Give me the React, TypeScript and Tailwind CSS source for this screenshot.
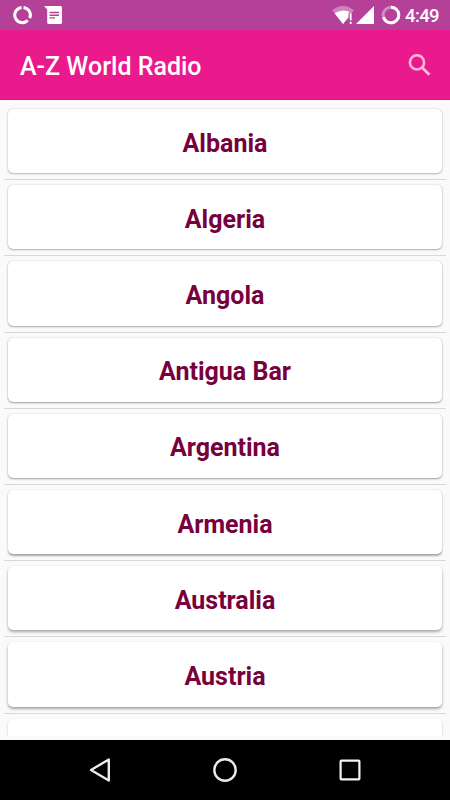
const countries = [
  { name: 'Albania', shadow: 'shadow-[0_0_1.5px_rgba(0,0,0,0.26),0_1px_2px_rgba(0,0,0,0.24)]' },
  { name: 'Algeria', shadow: 'shadow-[0_0_1.5px_rgba(0,0,0,0.24),0_1px_2px_rgba(0,0,0,0.28)]' },
  { name: 'Angola', shadow: 'shadow-[0_0_1.5px_rgba(0,0,0,0.22),0_1px_2px_rgba(0,0,0,0.30)]' },
  { name: 'Antigua Bar', shadow: 'shadow-[0_0_1.5px_rgba(0,0,0,0.18),0_1px_2px_rgba(0,0,0,0.34)]' },
  { name: 'Argentina', shadow: 'shadow-[0_0_1.5px_rgba(0,0,0,0.14),0_1px_2px_rgba(0,0,0,0.36)]' },
  { name: 'Armenia', shadow: 'shadow-[0_0_1.5px_rgba(0,0,0,0.12),0_1.5px_2px_rgba(0,0,0,0.32)]' },
  { name: 'Australia', shadow: 'shadow-[0_0_1.5px_rgba(0,0,0,0.10),0_2px_3px_rgba(0,0,0,0.32)]' },
  { name: 'Austria', shadow: 'shadow-[0_0_1.5px_rgba(0,0,0,0.08),0_2px_3px_rgba(0,0,0,0.34)]' },
  { name: '', shadow: 'shadow-[0_1px_2px_rgba(0,0,0,0.25)]' },
];

function StatusBar() {
  return (
    <div className="flex h-[30px] shrink-0 items-center bg-[#b54098] text-white">
      <svg className="ml-[13px] h-[20px] w-[20px]" viewBox="0 0 20 20" fill="none" stroke="white" strokeWidth="3">
        <path d="M10.5 2.4A7.6 7.6 0 0 1 16.6 13.2M14.8 15.4A7.6 7.6 0 1 1 8.6 2.5" />
      </svg>
      <svg className="ml-[11px] h-[20px] w-[20px]" viewBox="0 0 20 20">
        <path d="M0 1H16.5Q18 1 18 2.5V17.5Q18 19 16.5 19H4.8Q3.2 19 3.2 17.5V4.5Z" fill="white" />
        <path d="M5.6 7.5H15M5.6 10.2H15M5.6 12.9H11" stroke="#b54098" strokeWidth="1.4" />
      </svg>
      <svg className="ml-auto h-[20px] w-[22px]" viewBox="0 0 22 20">
        <path d="M0 5.2Q11 -3.4 22 5.2L19.5 8.2H17L11 19Z" fill="white" fillOpacity="0.35" />
        <path d="M2.6 8.2Q10.5 3.2 18.6 7.2H16.5V12.5L11 19Z" fill="white" />
        <path d="M18.7 8.2V15.2M18.7 16.8V19" stroke="white" strokeWidth="1.8" />
      </svg>
      <svg className="ml-[2px] h-[20px] w-[18px]" viewBox="0 0 18 20">
        <path d="M0 19H18V1Z" fill="white" />
      </svg>
      <svg className="ml-[7px] h-[20px] w-[20px]" viewBox="0 0 20 20" fill="none" strokeWidth="3">
        <circle cx="10" cy="10" r="7.8" stroke="white" strokeOpacity="0.4" />
        <path d="M10 2.2A7.8 7.8 0 1 1 2.5 12.2" stroke="white" />
      </svg>
      <span className="mr-[11px] ml-[4px] w-[34px] pt-px text-[18.5px] leading-[30px] font-medium tracking-[-0.6px] whitespace-nowrap">
        4:49
      </span>
    </div>
  );
}

function AppBar() {
  return (
    <header className="flex h-[70px] shrink-0 items-center justify-between border-b border-[#dc1580] bg-[#ea198c] pr-[18px] pl-5 text-white">
      <h1 className="pt-1 text-[25px] leading-[30px] font-medium">A-Z World Radio</h1>
      <svg className="h-[24px] w-[24px]" viewBox="0 0 24 24" fill="none" stroke="#fab6dc" strokeWidth="2.6">
        <circle cx="9" cy="9.4" r="7.1" />
        <path d="M13.9 14.3L21.4 21.8" strokeWidth="3" />
      </svg>
    </header>
  );
}

function NavigationBar() {
  return (
    <nav className="flex h-[60px] shrink-0 items-center justify-between bg-black px-[85px]">
      <svg className="h-[30px] w-[30px]" viewBox="0 0 30 30" fill="none" stroke="#ebebeb" strokeWidth="2.4" strokeLinejoin="round">
        <path d="M6 15L23.8 4.5V25.5Z" />
      </svg>
      <svg className="h-[30px] w-[30px]" viewBox="0 0 30 30" fill="none" stroke="#ebebeb" strokeWidth="2.4">
        <circle cx="15" cy="15" r="10.7" />
      </svg>
      <svg className="h-[30px] w-[30px]" viewBox="0 0 30 30" fill="none" stroke="#f2f2f2" strokeWidth="2.2">
        <rect x="5.6" y="5.6" width="18.8" height="18.8" rx="0.8" />
      </svg>
    </nav>
  );
}

export default function App() {
  return (
    <div className="flex h-[800px] w-[450px] flex-col overflow-hidden bg-[#fafafa] font-['Roboto',sans-serif]">
      <StatusBar />
      <AppBar />
      <main className="min-h-0 flex-1 px-1 py-1">
        <ul className="h-full overflow-hidden">
          {countries.map(({ name, shadow }) => (
            <li key={name} className="h-[76.2px] border-b border-[#d8d8d8] px-1 pt-[5px] pb-[6px]">
              <div
                className={`flex h-full items-center justify-center rounded-[5px] bg-white pt-[5px] text-[25px] leading-[30px] font-bold text-[#78003c] ${shadow}`}
              >
                {name}
              </div>
            </li>
          ))}
        </ul>
      </main>
      <NavigationBar />
    </div>
  );
}
